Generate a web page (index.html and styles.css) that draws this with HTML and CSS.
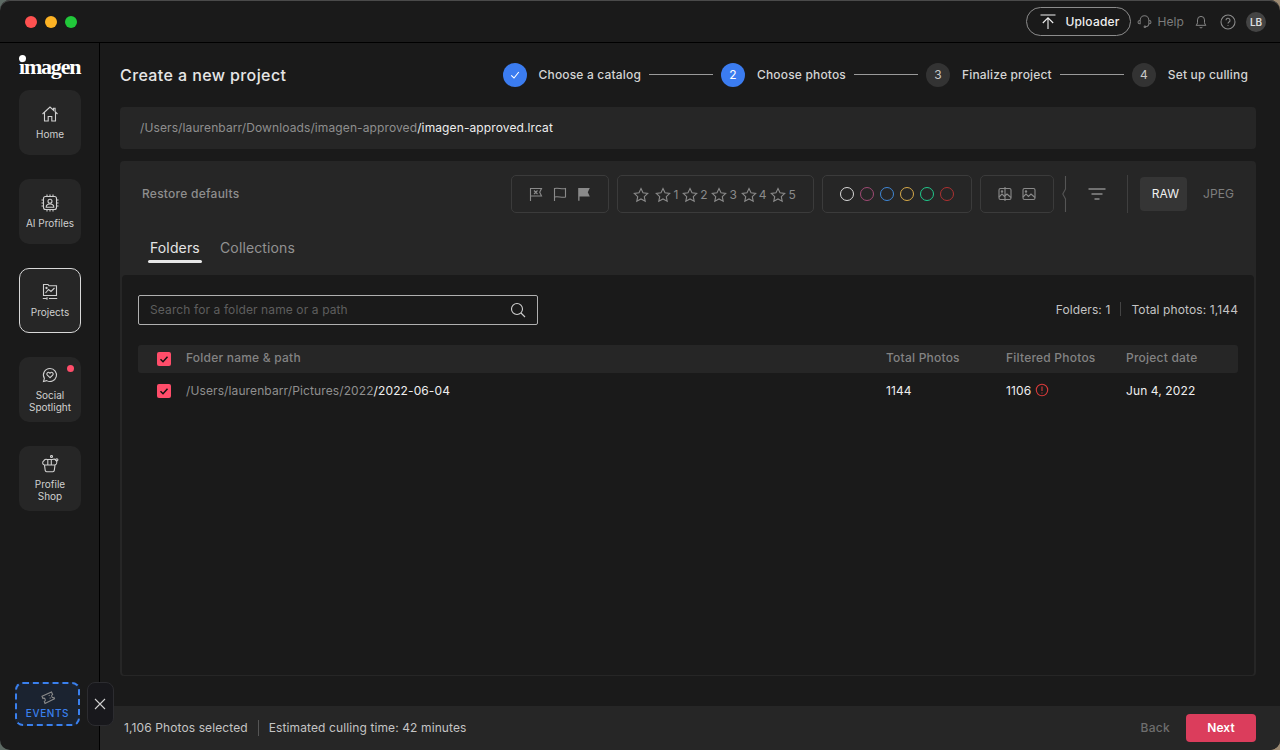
FILE: index.html
```html
<!DOCTYPE html>
<html lang="en">
<head>
<meta charset="utf-8">
<title>Create a new project</title>
<link rel="stylesheet" href="styles.css">
</head>
<body>
<div class="window">
  <header class="topbar">
    <div class="lights"><span class="light red"></span><span class="light amber"></span><span class="light green"></span></div>
    <div class="top-actions">
      <button class="uploader">
        <svg class="ic18" viewBox="0 0 18 18"><path d="M1.500 2h15M9 16V5M3.800 10 9 4.800l5.200 5.200"/></svg>
        <span>Uploader</span>
      </button>
      <div class="help">
        <svg class="ic14" viewBox="0 0 16 16"><path d="M3.400 7.500V6.500a4.600 4.600 0 0 1 9.200 0v1M3.400 7H2.800a1.600 1.600 0 0 0 0 3.400h.6zM12.600 7h.6a1.600 1.600 0 0 1 0 3.400h-.6zM12.600 10.400c0 2-1.500 3-3.600 3.200"/><circle cx="8.400" cy="13.600" r=".8"/></svg>
        <span>Help</span>
      </div>
      <svg class="ic14 bell" viewBox="0 0 16 16"><path d="M8 1.600a4 4 0 0 0-4 4v3.200c0 1.200-.8 2-1.600 3h11.200c-.8-1-1.600-1.800-1.600-3V5.600a4 4 0 0 0-4-4zM6.400 13.600a1.700 1.700 0 0 0 3.200 0"/></svg>
      <svg class="ic16 helpq" viewBox="0 0 16 16"><circle cx="8" cy="8" r="7"/><path d="M6 6.300a2 2 0 1 1 3 1.700c-.7.4-1 .8-1 1.600M8 11.300v.8"/></svg>
      <span class="avatar">LB</span>
    </div>
  </header>
  <div class="body">
    <aside class="sidebar">
      <div class="logo"><span class="logo-dot"></span>imagen</div>
      <nav class="nav">
        <a class="nav-item">
          <svg class="ic18" viewBox="0 0 18 18"><path d="M1.500 9 9 2l3.500 3.200V3.300h1.600v3.400L16.500 9M3.500 7.500V16h3.700v-4.500h3.600V16h3.700V7.500"/></svg>
          <span>Home</span>
        </a>
        <a class="nav-item">
          <svg class="ic18" viewBox="0 0 18 18"><rect x="2.500" y="2.500" width="13" height="13" rx="2"/><circle cx="9" cy="7.200" r="2"/><path d="M5.200 13.200c0-2.200 1.700-3.200 3.800-3.200s3.800 1 3.800 3.200zM6 .5v2M9 .5v2M12 .5v2M6 15.500v2M9 15.500v2M12 15.500v2M.5 6h2M.5 9h2M.5 12h2M15.500 6h2M15.500 9h2M15.500 12h2"/></svg>
          <span>AI Profiles</span>
        </a>
        <a class="nav-item active">
          <svg class="ic18" viewBox="0 0 18 18"><path d="M2.500 12.500V1.500h4.500l1 1.300h7.500v9.700zM4.500 10l3-3.500 2.500 2 3.500-3.500M1.800 15.500h4M8 15.500h8.200"/><circle cx="5.500" cy="5" r=".6"/><path d="M6 14.200v2.600"/></svg>
          <span>Projects</span>
        </a>
        <a class="nav-item">
          <span class="nav-dot"></span>
          <svg class="ic18" viewBox="0 0 18 18"><path d="M9 2.500a6.500 6.500 0 1 1-3.300 12.100L2.500 15.500l.9-3.100A6.500 6.500 0 0 1 9 2.500z"/><path d="M9 11.700 6.300 9.100a1.600 1.600 0 0 1 2.300-2.300l.4.400.4-.4a1.600 1.600 0 0 1 2.300 2.300z"/></svg>
          <span>Social<br>Spotlight</span>
        </a>
        <a class="nav-item">
          <svg class="ic18" viewBox="0 0 18 18"><path d="M3.500 10h10.500l-.7 5.400a1.500 1.500 0 0 1-1.500 1.300H5.700a1.500 1.500 0 0 1-1.500-1.300zM3.500 10a2.300 2.300 0 0 1-.6-4.300 2.300 2.300 0 0 1 3.100-1.200h5.500a2.300 2.300 0 0 1 2.500 5.500M6.800 4.500V10M10.300 4.500V10"/><circle cx="10.500" cy="1.500" r="1"/><circle cx="15.800" cy="4.800" r="1.100"/></svg>
          <span>Profile<br>Shop</span>
        </a>
      </nav>
      <div class="events">
        <svg class="ic16" viewBox="0 0 16 16"><path d="M2 6.300 11.500 2l1.100 2.500a1.500 1.500 0 0 0 1.400 3l.5 1.300L5 13.500l-.7-2a1.500 1.500 0 0 0-1.400-3.100z"/><path d="M9 5l.4 1M10 7.500l.4 1"/></svg>
        <span>EVENTS</span>
      </div>
      <button class="events-close">
        <svg class="ic12" viewBox="0 0 12 12"><path d="M1 1l10 10M11 1 1 11"/></svg>
      </button>
    </aside>
    <main class="main">
      <div class="content">
        <div class="head">
          <h1>Create a new project</h1>
          <ol class="steps">
            <li class="step"><span class="num on"><svg class="ic10" viewBox="0 0 10 10"><path d="M1.200 5.400 4 8l4.800-6"/></svg></span><span class="step-label">Choose a catalog</span></li>
            <li class="rule"></li>
            <li class="step"><span class="num on">2</span><span class="step-label">Choose photos</span></li>
            <li class="rule"></li>
            <li class="step"><span class="num">3</span><span class="step-label">Finalize project</span></li>
            <li class="rule"></li>
            <li class="step"><span class="num">4</span><span class="step-label">Set up culling</span></li>
          </ol>
        </div>
        <div class="pathbar"><span class="dim">/Users/laurenbarr/Downloads/imagen-approved</span>/imagen-approved.lrcat</div>
        <section class="panel">
          <div class="filters">
            <span class="restore">Restore defaults</span>
            <div class="filter-groups">
              <div class="group flags">
                <svg class="ic16" viewBox="0 0 16 16"><path d="M2.500 15V2.500h11l-1.800 3.700 1.800 3.800h-11M6 4.500l3.500 3.500M9.500 4.500 6 8"/></svg>
                <svg class="ic16" viewBox="0 0 16 16"><path d="M2.500 15V2.500c3.500-1.200 7 1 11 0v8.500c-4 1-7.500-1.200-11 0"/></svg>
                <svg class="ic16 filled" viewBox="0 0 16 16"><path d="M2.200 14.800V2h11.600l-2 4.200 2 4.300H3.500v4.300z"/></svg>
              </div>
              <div class="group stars">
                <span class="star first"><svg class="ic16" viewBox="0 0 16 16"><path d="m8 1.500 2 4.300 4.700.6-3.400 3.200.9 4.700L8 12l-4.200 2.300.9-4.700L1.300 6.400 6 5.800z"/></svg></span>
                <span class="star"><svg class="ic16" viewBox="0 0 16 16"><path d="m8 1.500 2 4.300 4.700.6-3.400 3.200.9 4.700L8 12l-4.200 2.300.9-4.700L1.300 6.400 6 5.800z"/></svg>1</span>
                <span class="star"><svg class="ic16" viewBox="0 0 16 16"><path d="m8 1.500 2 4.300 4.700.6-3.400 3.200.9 4.700L8 12l-4.200 2.300.9-4.700L1.300 6.400 6 5.800z"/></svg>2</span>
                <span class="star"><svg class="ic16" viewBox="0 0 16 16"><path d="m8 1.500 2 4.300 4.700.6-3.400 3.200.9 4.700L8 12l-4.200 2.300.9-4.700L1.300 6.400 6 5.800z"/></svg>3</span>
                <span class="star"><svg class="ic16" viewBox="0 0 16 16"><path d="m8 1.500 2 4.300 4.700.6-3.400 3.200.9 4.700L8 12l-4.200 2.300.9-4.700L1.300 6.400 6 5.800z"/></svg>4</span>
                <span class="star"><svg class="ic16" viewBox="0 0 16 16"><path d="m8 1.500 2 4.300 4.700.6-3.400 3.200.9 4.700L8 12l-4.200 2.300.9-4.700L1.300 6.400 6 5.800z"/></svg>5</span>
              </div>
              <div class="group colors">
                <span class="ring c-white"></span><span class="ring c-pink"></span><span class="ring c-blue"></span><span class="ring c-yellow"></span><span class="ring c-green"></span><span class="ring c-red"></span>
              </div>
              <div class="group media">
                <svg class="ic14" viewBox="0 0 14 14"><rect x="1" y="1.500" width="12" height="11" rx="1.500"/><path d="M7 0v14M1 10l3-3 2.500 2.500L9 7l4 3.500"/><circle cx="4" cy="4.500" r=".7"/></svg>
                <svg class="ic14" viewBox="0 0 14 14"><rect x="1" y="1.500" width="12" height="11" rx="1.500"/><path d="M1 10l3-3 2.500 2.500L9 7l4 3.500"/><circle cx="4" cy="4.500" r=".7"/></svg>
              </div>
              <div class="collapse">
                <svg class="chev" viewBox="0 0 6 38"><path d="M3.500 1v13L.8 19l2.700 5v13"/></svg>
              </div>
              <svg class="sort" viewBox="0 0 18 12"><path d="M.5 1h17M3.500 6h11M6.500 11h5"/></svg>
              <span class="vrule"></span>
              <button class="fmt raw">RAW</button>
              <button class="fmt">JPEG</button>
            </div>
          </div>
          <div class="tabs">
            <span class="tab on">Folders</span>
            <span class="tab">Collections</span>
          </div>
          <div class="inner">
            <div class="searchrow">
              <div class="search">
                <span class="placeholder">Search for a folder name or a path</span>
                <svg class="ic16" viewBox="0 0 16 16"><circle cx="7" cy="7" r="5.500"/><path d="m11 11 4 4"/></svg>
              </div>
              <div class="totals"><span>Folders: 1</span><span class="sep"></span><span>Total photos: 1,144</span></div>
            </div>
            <div class="table">
              <div class="tr th">
                <span class="check"><svg viewBox="0 0 14 14"><path d="m3.500 7.300 2.500 2.400 4.500-5"/></svg></span>
                <span>Folder name &amp; path</span><span>Total Photos</span><span>Filtered Photos</span><span>Project date</span>
              </div>
              <div class="tr td">
                <span class="check"><svg viewBox="0 0 14 14"><path d="m3.500 7.300 2.500 2.400 4.500-5"/></svg></span>
                <span><span class="dim">/Users/laurenbarr/Pictures/2022</span>/2022-06-04</span>
                <span>1144</span>
                <span class="filtered">1106 <svg class="warn" viewBox="0 0 14 14"><circle cx="7" cy="7" r="5.700"/><path d="M7 3.600v4.400M7 9.600v1"/></svg></span>
                <span>Jun 4, 2022</span>
              </div>
            </div>
          </div>
        </section>
      </div>
      <footer class="footer">
        <div class="summary"><span>1,106 Photos selected</span><span class="sep"></span><span>Estimated culling time: 42 minutes</span></div>
        <div class="foot-actions"><span class="back">Back</span><button class="next">Next</button></div>
      </footer>
    </main>
  </div>
</div>
</body>
</html>
```
FILE: styles.css
```css
* { box-sizing: border-box; }
html, body { margin: 0; height: 100%; }
body {
  width: 1280px;
  height: 750px;
  overflow: hidden;
  font-family: Inter, "Liberation Sans", sans-serif;
  letter-spacing: 0.11px;
  background: linear-gradient(90deg, #5d6a64 0%, #9d8a72 100%);
}
svg { display: block; fill: none; stroke: currentColor; stroke-width: 1.1; flex: none; }
button { font: inherit; letter-spacing: inherit; border: 0; background: none; padding: 0; color: inherit; }
ol { list-style: none; margin: 0; padding: 0; }
h1 { margin: 0; }

.ic10 { width: 10px; height: 10px; }
.ic12 { width: 12px; height: 12px; }
.ic14 { width: 14px; height: 14px; }
.ic16 { width: 16px; height: 16px; }
.ic18 { width: 18px; height: 18px; }

.window {
  width: 1280px;
  height: 750px;
  background: #1a1a1a;
  border-radius: 10px;
  overflow: hidden;
  display: flex;
  flex-direction: column;
  box-shadow: inset 0 1px 0 #4a4a4a;
}
.dim { color: #8f8f8f; }

/* top bar */
.topbar {
  height: 43px;
  flex: none;
  display: flex;
  align-items: center;
  justify-content: space-between;
  padding: 1px 14px 0 25px;
  border-bottom: 1px solid #000;
}
.lights { display: flex; gap: 8px; }
.light { width: 12px; height: 12px; border-radius: 50%; }
.red { background: #ff5150; }
.amber { background: #fdb324; }
.green { background: #21c83a; }
.top-actions { display: flex; align-items: center; color: #8a8a8a; }
.uploader {
  width: 105px;
  height: 29px;
  border: 1px solid #8c8c8c;
  border-radius: 15px;
  display: flex;
  align-items: center;
  gap: 8px;
  padding-left: 12px;
  color: #f0f0f0;
  font-size: 12px;
  font-weight: 500;
  letter-spacing: 0.2px;
}
.help { display: flex; align-items: center; gap: 5px; margin-left: 6px; font-size: 12px; color: #7c7c7c; }
.help .ic14 { width: 15px; height: 15px; }
.bell { margin-left: 10px; }
.helpq { margin-left: 12px; }
.avatar {
  width: 20px;
  height: 20px;
  margin-left: 10px;
  border-radius: 50%;
  background: #444;
  color: #ddd;
  font-size: 10px;
  font-weight: 600;
  letter-spacing: 0;
  display: flex;
  align-items: center;
  justify-content: center;
}

.body { flex: 1; display: flex; min-height: 0; }

/* sidebar */
.sidebar {
  width: 100px;
  flex: none;
  border-right: 1px solid #000;
  position: relative;
  padding: 10px 18px 0 19px;
}
.logo {
  position: relative;
  height: 37px;
  font-family: "Liberation Serif", serif;
  font-weight: 700;
  font-size: 22px;
  line-height: 26px;
  letter-spacing: -1.200px;
  color: #fff;
  padding-top: 1px;
}
.logo-dot {
  position: absolute;
  left: 0;
  top: 2px;
  width: 7px;
  height: 7px;
  border-radius: 50%;
  background: #fff;
}
.nav { display: flex; flex-direction: column; gap: 24px; }
.nav-item {
  position: relative;
  width: 62px;
  height: 65px;
  background: #262626;
  border-radius: 10px;
  display: flex;
  flex-direction: column;
  align-items: center;
  justify-content: center;
  gap: 5px;
  color: #d0d0d0;
  font-size: 10px;
  line-height: 12px;
  letter-spacing: 0;
  text-align: center;
}
.nav-item.active { border: 1px solid #d8d8d8; }
.nav-dot {
  position: absolute;
  top: 8px;
  right: 7px;
  width: 7px;
  height: 7px;
  border-radius: 50%;
  background: #ff4d6a;
}
.events {
  position: absolute;
  left: 15px;
  top: 639px;
  width: 65px;
  height: 44px;
  border: 2px dashed #3a80ee;
  border-radius: 8px;
  background: #1b2330;
  color: #3a80ee;
  font-size: 10px;
  font-weight: 500;
  letter-spacing: 0.6px;
  display: flex;
  flex-direction: column;
  align-items: center;
  padding-top: 6px;
  gap: 1px;
}
.events .ic16 { color: #8a8a8a; }
.events-close {
  position: absolute;
  left: 87px;
  top: 639px;
  width: 27px;
  height: 44px;
  z-index: 2;
  border: 1px solid #2c2c30;
  border-radius: 8px;
  background: #18181c;
  color: #cfcfcf;
  display: flex;
  align-items: center;
  justify-content: center;
  padding-right: 1px;
}

/* main */
.main { flex: 1; min-width: 0; display: flex; flex-direction: column; }
.content { flex: 1; min-height: 0; display: flex; flex-direction: column; padding: 0 24px 30px 20px; }
.head { height: 64px; flex: none; display: flex; align-items: center; justify-content: space-between; padding-right: 8px; }
h1 { font-size: 16px; font-weight: 500; color: #e6e6e6; letter-spacing: 0.4px; }
.steps { display: flex; align-items: center; gap: 8px; margin-top: -1px; }
.step { display: flex; align-items: center; gap: 12px; font-size: 12px; font-weight: 500; letter-spacing: 0.17px; color: #d4d4d4; }
.num {
  width: 24px;
  height: 24px;
  border-radius: 50%;
  background: #333;
  color: #c8c8c8;
  font-weight: 400;
  letter-spacing: 0;
  display: flex;
  align-items: center;
  justify-content: center;
}
.num.on { background: #3b7cf0; color: #fff; }
.rule { width: 64px; height: 1px; background: #9a9a9a; }
.pathbar {
  height: 42px;
  flex: none;
  background: #262626;
  border-radius: 4px;
  display: flex;
  align-items: center;
  padding: 0 0 2px 20px;
  font-size: 12px;
  color: #eee;
  margin-bottom: 12px;
}
.panel {
  flex: 1;
  min-height: 0;
  background: #262626;
  border-radius: 4px;
  padding: 14px 2px 1px;
  display: flex;
  flex-direction: column;
}
.filters { height: 38px; flex: none; display: flex; align-items: center; justify-content: space-between; padding: 0 12px 0 20px; }
.restore { font-size: 12px; font-weight: 500; letter-spacing: 0.25px; color: #8e8e8e; padding-bottom: 1px; }
.filter-groups { display: flex; align-items: center; gap: 8px; color: #8a8a8a; }
.group {
  height: 38px;
  border: 1px solid #3b3b3b;
  border-radius: 5px;
  display: flex;
  align-items: center;
  justify-content: center;
}
.flags { width: 98px; gap: 8px; }
.filled { fill: #8a8a8a; stroke: none; }
.stars { width: 197px; gap: 3.800px; font-size: 12px; padding: 1px 2px 0 0; }
.star { display: flex; align-items: center; gap: 2px; }
.star.first { margin-right: 2.500px; }
.colors { width: 150px; gap: 6px; }
.ring { width: 14px; height: 14px; border-radius: 50%; border: 1.500px solid; }
.c-white { border-color: #d8d8d8; }
.c-pink { border-color: #a04a74; }
.c-blue { border-color: #3f88d8; }
.c-yellow { border-color: #d8aa48; }
.c-green { border-color: #1fc98c; }
.c-red { border-color: #b03030; }
.media { width: 74px; gap: 10px; }
.collapse { height: 38px; }
.chev { width: 6px; height: 38px; color: #555; }
.sort { width: 18px; height: 12px; margin-left: 12px; stroke-width: 1.500; }
.vrule { width: 1px; height: 38px; background: #3f3f3f; margin-left: 13px; margin-right: 4px; }
.fmt { font-size: 12px; width: 47px; height: 34px; border-radius: 4px; color: #7e7e7e; padding-bottom: 1px; }
.raw { background: #353535; color: #f0f0f0; padding-left: 4px; }
.tabs { height: 62px; flex: none; display: flex; gap: 16px; padding: 20px 0 0 26px; }
.tab {
  position: relative;
  height: 30px;
  font-size: 14px;
  line-height: 30px;
  letter-spacing: 0.13px;
  color: #929292;
  padding: 0 2px;
}
.tab.on { color: #e4e4e4; width: 54px; }
.tab.on::after {
  content: "";
  position: absolute;
  left: 0;
  right: 0;
  bottom: 0;
  height: 3px;
  border-radius: 2px;
  background: #e8e8e8;
}
.inner {
  flex: 1;
  min-height: 0;
  background: #1a1a1a;
  border-radius: 4px 4px 3px 3px;
  padding: 20px 16px 0;
}
.searchrow { display: flex; align-items: center; justify-content: space-between; height: 30px; margin-bottom: 20px; }
.search {
  width: 400px;
  height: 30px;
  border: 1px solid #b0b0b0;
  border-radius: 2px;
  display: flex;
  align-items: center;
  justify-content: space-between;
  padding: 0 11px 0 11px;
  color: #d0d0d0;
}
.placeholder { font-size: 12px; color: #5e5e5e; padding-bottom: 2px; }
.totals { display: flex; align-items: center; gap: 10px; font-size: 12px; color: #c4c4c4; padding-bottom: 2px; }
.sep { width: 1px; height: 14px; background: #444; }
.tr { display: grid; grid-template-columns: 48px 700px 120px 120px 112px; align-items: center; font-size: 12px; }
.th { height: 28px; background: #262626; border-radius: 3px; color: #838383; font-weight: 500; letter-spacing: 0.22px; }
.th > span { margin-bottom: 4px; }
.td { height: 36px; color: #eee; }
.td > span { margin-bottom: 2px; }
.tr > .check { margin-bottom: 0; }
.check {
  width: 14px;
  height: 14px;
  margin-left: 19px;
  border-radius: 2px;
  background: #ff4d6a;
  color: #111;
}
.check svg { width: 14px; height: 14px; stroke-width: 1.500; }
.filtered { display: flex; align-items: center; gap: 4px; }
.warn { width: 14px; height: 14px; color: #d63a3a; }

/* footer */
.footer {
  height: 44px;
  flex: none;
  background: #262626;
  display: flex;
  align-items: center;
  justify-content: space-between;
  padding: 0 24px;
  font-size: 12px;
}
.summary { display: flex; align-items: center; gap: 10px; color: #c4c4c4; padding-bottom: 1px; }
.summary .sep { height: 16px; background: #555; }
.foot-actions { display: flex; align-items: center; gap: 16px; }
.back { font-weight: 500; letter-spacing: 0.3px; color: #6e6e6e; padding-bottom: 1px; }
.next {
  width: 70px;
  height: 28px;
  border-radius: 4px;
  background: #db3d5c;
  color: #fff;
  font-weight: 600;
  padding-bottom: 2px;
}
```
